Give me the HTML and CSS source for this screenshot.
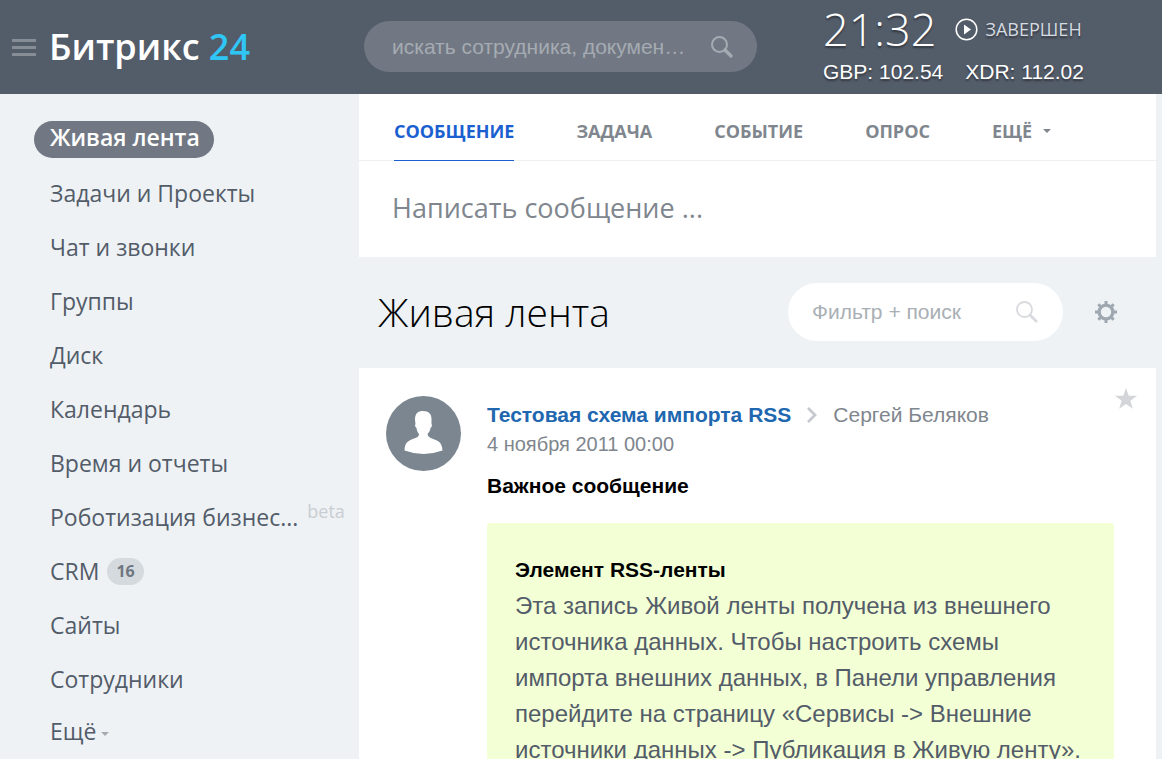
FILE: index.html
```html
<!DOCTYPE html>
<html lang="ru">
<head>
<meta charset="utf-8">
<meta name="viewport" content="width=device-width, initial-scale=1">
<title>Битрикс 24</title>
<link rel="stylesheet" href="styles.css">
</head>
<body>
<header class="header">
  <div class="brand">
    <button class="burger" type="button" aria-label="Меню"><span></span><span></span><span></span></button>
    <a class="logo" href="#">Битрикс <span class="logo-num">24</span></a>
  </div>
  <form class="search">
    <input class="search-input" type="text" aria-label="Поиск" placeholder="искать сотрудника, документ, прочее">
    <button class="icon-button" type="button" aria-label="Найти">
      <svg width="22" height="22" viewBox="0 0 22 22" fill="none" stroke="#a5abb2"><circle cx="8.500" cy="8.500" r="7.500" stroke-width="2"/><path d="M14 14l6 6" stroke-width="3.200" stroke-linecap="round"/></svg>
    </button>
  </form>
  <div class="status">
    <div class="status-row">
      <time class="clock">21:32</time>
      <button class="workday" type="button">
        <svg width="23" height="23" viewBox="0 0 23 23"><circle cx="11.500" cy="11.500" r="10.300" fill="none" stroke="#fff" stroke-width="1.500"/><path d="M9 6.500v10l7-5z" fill="#fff"/></svg>
        ЗАВЕРШЕН
      </button>
    </div>
    <div class="rates"><span>GBP: 102.54</span><span>XDR: 112.02</span></div>
  </div>
</header>
<div class="layout">
  <nav class="menu">
    <a class="menu-item menu-item-active" href="#">Живая лента</a>
    <a class="menu-item" href="#">Задачи и Проекты</a>
    <a class="menu-item" href="#">Чат и звонки</a>
    <a class="menu-item" href="#">Группы</a>
    <a class="menu-item" href="#">Диск</a>
    <a class="menu-item" href="#">Календарь</a>
    <a class="menu-item" href="#">Время и отчеты</a>
    <a class="menu-item" href="#">Роботизация бизнес...<span class="beta">beta</span></a>
    <a class="menu-item" href="#">CRM<span class="counter">16</span></a>
    <a class="menu-item" href="#">Сайты</a>
    <a class="menu-item" href="#">Сотрудники</a>
    <button class="menu-item menu-more" type="button">Ещё<span class="caret"></span></button>
  </nav>
  <main class="main">
    <section class="composer">
      <div class="tabs">
        <button class="tab tab-active" type="button">СООБЩЕНИЕ</button>
        <button class="tab" type="button">ЗАДАЧА</button>
        <button class="tab" type="button">СОБЫТИЕ</button>
        <button class="tab" type="button">ОПРОС</button>
        <button class="tab" type="button">ЕЩЁ<span class="caret"></span></button>
      </div>
      <input class="composer-input" type="text" aria-label="Сообщение" placeholder="Написать сообщение ...">
    </section>
    <div class="toolbar">
      <h1 class="title">Живая лента</h1>
      <form class="filter">
        <input class="filter-input" type="text" aria-label="Фильтр" placeholder="Фильтр + поиск">
        <button class="icon-button" type="button" aria-label="Искать">
          <svg width="22" height="22" viewBox="0 0 22 22" fill="none" stroke="#d8dadd"><circle cx="8.500" cy="8.500" r="7.500" stroke-width="1.800"/><path d="M14 14l7 7" stroke-width="2.600"/></svg>
        </button>
      </form>
      <button class="icon-button" type="button" aria-label="Настройки">
        <svg width="22" height="22" viewBox="0 0 22 22" stroke="#9fa7b0" fill="none"><circle cx="11" cy="11" r="6.900" stroke-width="3.400"/><path d="M11 0v4M11 18v4M0 11h4M18 11h4M3.300 3.300l2.500 2.500M16.200 16.200l2.500 2.500M3.300 18.700l2.500-2.500M16.200 5.800l2.500-2.500" stroke-width="3"/></svg>
      </button>
    </div>
    <article class="post">
      <svg class="avatar" width="75" height="75" viewBox="0 0 75 75"><circle cx="37.500" cy="37.500" r="37.500" fill="#7b8691"/><path fill="#fff" d="M29 24C29 17 32 15 37 15C43 15 45.500 18 45.500 23L45.500 28Q46.500 29 45.500 31L44.500 32C44 35 43 36.500 41.500 38Q42 41 46 42.500C51 44.500 56 45 56.500 54.500Q47 58 37.500 58Q28 58 18.500 54.500C18.500 46 23 44.500 28 42.500Q33 41 33 38C31.500 36.500 31 35 30.500 32L29.500 31Q28.500 29 29.500 28Z"/></svg>
      <div class="post-body">
        <div class="post-head">
          <a class="author" href="#">Тестовая схема импорта RSS</a>
          <svg width="10" height="16" viewBox="0 0 10 16" fill="none" stroke="#c6c9cf" stroke-width="2.800"><path d="M1 1l7 7-7 7"/></svg>
          <a class="recipient" href="#">Сергей Беляков</a>
        </div>
        <time class="date">4 ноября 2011 00:00</time>
        <h2 class="post-title">Важное сообщение</h2>
        <div class="note">
          <h3 class="note-title">Элемент RSS-ленты</h3>
          <p class="note-text">Эта запись Живой ленты получена из внешнего источника данных. Чтобы настроить схемы импорта внешних данных, в Панели управления перейдите на страницу «Сервисы -&gt; Внешние источники данных -&gt; Публикация в Живую ленту».</p>
        </div>
      </div>
      <button class="icon-button star" type="button" aria-label="В избранное">
        <svg width="22" height="21" viewBox="0 0 22 21"><path fill="#d3d5d9" d="M11 0l2.700 7.700H22l-6.600 5 2.400 8.000L11 16l-6.800 4.700 2.400-8L0 7.700h8.300z"/></svg>
      </button>
    </article>
  </main>
</div>
</body>
</html>
```
FILE: styles.css
```css
* { box-sizing: border-box; }
body {
  margin: 0;
  height: 100vh;
  overflow: hidden;
  background: #eef2f5;
  font-family: "Liberation Sans", Arial, sans-serif;
  color: #535c69;
}
a { text-decoration: none; color: inherit; }
button, input { font: inherit; color: inherit; border: 0; background: none; padding: 0; margin: 0; outline: 0; }
.icon-button { display: flex; flex: none; }

.header {
  display: flex;
  height: 94px;
  background: #535c69;
  color: #fff;
}
.brand { display: flex; align-items: center; gap: 13px; width: 364px; padding-left: 12px; }
.burger { display: flex; flex-direction: column; gap: 4px; width: 24px; }
.burger span { height: 3px; background: #878d96; }
.logo { font: 600 36px/50px "Open Sans", sans-serif; }
.logo-num { color: #2fc6f6; }
.search {
  display: flex;
  align-items: center;
  gap: 20px;
  width: 393px;
  height: 51px;
  margin-top: 21px;
  padding: 0 24px 0 28px;
  border-radius: 26px;
  background: #717883;
}
.search-input { flex: 1; min-width: 0; height: 30px; font-size: 21px; text-overflow: ellipsis; }
.search-input::placeholder { color: #a5abb2; opacity: 1; }
.status { margin-left: 66px; text-shadow: 0 2px 2px rgba(0, 0, 0, 0.4); }
.status-row { display: flex; align-items: center; gap: 19px; height: 58px; }
.clock { font: 300 45px/56px "Open Sans", sans-serif; }
.workday { display: flex; align-items: center; gap: 7px; font: 18px/24px "Open Sans", sans-serif; color: #d5dbe1; text-shadow: inherit; }
.rates { display: flex; gap: 22px; font-size: 21px; line-height: 28px; }

.layout { display: grid; grid-template-columns: 359px 1fr; padding-right: 6px; }
.menu { display: flex; flex-direction: column; align-items: flex-start; padding: 27px 0 0 34px; }
.menu-item {
  display: flex;
  align-items: center;
  height: 54px;
  padding: 0 0 0 16px;
  font: 23px/36px "Open Sans", sans-serif;
  white-space: nowrap;
}
.menu-item-active {
  height: 37px;
  margin-bottom: 8px;
  padding: 0 14px 5px 16px;
  border-radius: 19px;
  background: #717883;
  color: #fff;
  font-weight: 600;
}
.beta { align-self: flex-start; margin-left: 9px; font-size: 18px; line-height: 42px; color: #c9cdd1; }
.counter { margin-left: 8px; padding: 0 9px; border-radius: 14px; background: #d5dadf; font-size: 16px; font-weight: 700; line-height: 27px; color: #6f7781; }
.caret { display: inline-block; border: 4px solid transparent; border-top-color: currentColor; border-bottom: 0; }
.menu-more { height: 50px; gap: 5px; }
.menu-more .caret { margin-top: 6px; color: #a5abb3; }

.composer { background: #fff; }
.tabs { display: flex; gap: 62px; height: 67px; padding-left: 35px; border-bottom: 1px solid #eef0f1; }
.tab { height: 67px; padding-top: 7px; border-bottom: 1px solid transparent; font: 700 18px/24px "Open Sans", sans-serif; color: #80868e; }
.tab .caret { margin: 0 0 5px 11px; }
.tab-active { border-color: #1b5fd0; color: #1b5fd0; }
.composer-input { display: block; width: 100%; height: 96px; padding: 0 33px 3px; font: 27px/38px "Open Sans", sans-serif; }
.composer-input::placeholder { color: #80868e; opacity: 1; }

.toolbar { display: flex; align-items: center; height: 111px; padding: 0 39px 2px 19px; }
.title { flex: 1; margin: 0; font: 300 39px/54px "Open Sans", sans-serif; color: #000; }
.filter { display: flex; align-items: center; width: 275px; height: 58px; margin-right: 32px; padding: 0 25px 0 24px; border-radius: 29px; background: #fff; }
.filter-input { flex: 1; min-width: 0; height: 30px; font-size: 21px; }
.filter-input::placeholder { color: #a9afb5; opacity: 1; }

.post { display: flex; align-items: flex-start; padding: 28px 19px 0 27px; background: #fff; }
.avatar { flex: none; }
.post-body { flex: 1; min-width: 0; margin-left: 26px; }
.post-head { display: flex; align-items: center; gap: 16px; margin-top: 4px; font-size: 21px; line-height: 30px; }
.author { font-weight: 700; color: #2067b0; }
.recipient { color: #80868e; }
.date { display: block; font-size: 20px; line-height: 28px; color: #80868e; }
.post-title { margin: 13px 0 22px; font-size: 21px; line-height: 30px; color: #000; }
.note { padding: 28px; border-radius: 3px; background: #f3ffd5; }
.note-title { margin: 0; font-size: 21px; line-height: 37px; color: #000; }
.note-text { margin: 0; font-size: 24px; line-height: 36px; }
.star { margin: -8px 0 0 1px; }
```
